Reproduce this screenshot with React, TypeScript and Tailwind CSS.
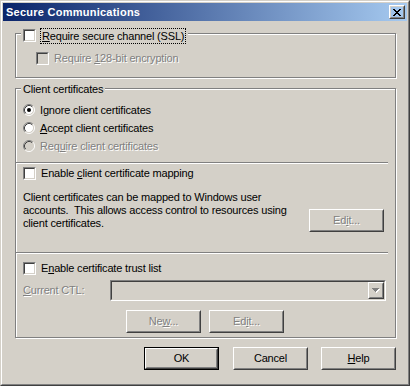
import type { ReactNode } from "react";

const dis = "text-[#808080] [text-shadow:1px_1px_0_#ffffff]";

function Check({ disabled }: { disabled?: boolean }) {
  return (
    <span className="flex h-[13px] w-[13px] shrink-0 border border-t-[#808080] border-l-[#808080] border-r-white border-b-white">
      <span
        className={`flex-1 border border-t-[#404040] border-l-[#404040] border-r-[#d4d0c8] border-b-[#d4d0c8] ${
          disabled ? "bg-[#d4d0c8]" : "bg-white"
        }`}
      />
    </span>
  );
}

function Radio({ checked, disabled }: { checked?: boolean; disabled?: boolean }) {
  return (
    <svg width="12" height="12" viewBox="0 0 12 12" className="shrink-0">
      <circle cx="6" cy="6" r="4.5" fill={disabled ? "#d4d0c8" : "#ffffff"} />
      <path d="M2.11 9.89A5.5 5.5 0 0 1 9.89 2.11" fill="none" stroke="#808080" />
      <path d="M9.89 2.11A5.5 5.5 0 0 1 2.11 9.89" fill="none" stroke="#ffffff" />
      <path d="M2.82 9.18A4.5 4.5 0 0 1 9.18 2.82" fill="none" stroke="#404040" />
      <path d="M9.18 2.82A4.5 4.5 0 0 1 2.82 9.18" fill="none" stroke="#d4d0c8" />
      {checked && <circle cx="6" cy="6" r="2" fill="#000000" />}
    </svg>
  );
}

function Raised({ children }: { children: ReactNode }) {
  return (
    <div className="flex h-full w-full border border-t-white border-l-white border-r-[#404040] border-b-[#404040]">
      <div className="flex flex-1 items-center justify-center border border-t-[#d4d0c8] border-l-[#d4d0c8] border-r-[#808080] border-b-[#808080]">
        {children}
      </div>
    </div>
  );
}

function Button({
  children,
  isDefault,
  disabled,
}: {
  children: ReactNode;
  isDefault?: boolean;
  disabled?: boolean;
}) {
  return (
    <div className={`h-[23px] w-[75px] shrink-0 ${isDefault ? "border border-black" : ""}`}>
      <Raised>
        <span className={`leading-[13px] ${disabled ? dis : "text-black"}`}>{children}</span>
      </Raised>
    </div>
  );
}

function U({ children }: { children: ReactNode }) {
  return <span className="underline underline-offset-[1px]">{children}</span>;
}

function Etched() {
  return <div className="h-[2px] w-[372px] border-t border-b border-t-[#808080] border-b-white" />;
}

export default function App() {
  return (
    <div className="h-[386px] w-[410px] border border-t-[#d4d0c8] border-l-[#d4d0c8] border-r-[#404040] border-b-[#404040] bg-[#d4d0c8] font-['Liberation_Sans',Arial,sans-serif] text-[11px] tracking-[-0.18px] text-black">
      <div className="flex h-full flex-col border border-t-white border-l-white border-r-[#808080] border-b-[#808080] p-px">
        {/* caption */}
        <div className="flex h-[18px] shrink-0 items-center justify-between bg-[linear-gradient(to_right,#0a246a,#a6caf0)] pl-[3px] pr-[2px]">
          <span className="text-[11px] leading-none font-bold tracking-[0.25px] text-white">
            Secure Communications
          </span>
          <div className="h-[14px] w-[16px]">
            <Raised>
              <svg width="8" height="7" viewBox="0 0 8 7" shapeRendering="crispEdges">
                <path
                  fill="#000000"
                  d="M0 0h2v1H0zM6 0h2v1H6zM1 1h2v1H1zM5 1h2v1H5zM2 2h4v1H2zM3 3h2v1H3zM2 4h4v1H2zM1 5h2v1H1zM5 5h2v1H5zM0 6h2v1H0zM6 6h2v1H6z"
                />
              </svg>
            </Raised>
          </div>
        </div>

        {/* SSL group */}
        <div className="relative ml-3 mt-3 h-[45px] w-[381px] border border-[#808080] shadow-[inset_1px_1px_0_#ffffff,1px_1px_0_#ffffff]">
          <div className="absolute left-[5px] top-[-6px] flex bg-[#d4d0c8] px-[2px]">
            <span className="mt-px">
              <Check />
            </span>
            <span className="ml-1 h-[16px] border border-dotted border-black px-px leading-[14px]">
              <U>R</U>equire secure channel (SSL)
            </span>
          </div>
          <div className="flex h-[13px] items-center pl-[20px] mt-[18px]">
            <Check disabled />
            <span className={`ml-[5px] leading-[13px] ${dis}`}>
              Require <U>1</U>28-bit encryption
            </span>
          </div>
        </div>

        {/* client certificates group */}
        <div className="relative ml-3 mt-[10px] flex h-[250px] w-[381px] flex-col border border-[#808080] pt-[12px] shadow-[inset_1px_1px_0_#ffffff,1px_1px_0_#ffffff]">
          <span className="absolute left-[5px] top-[-6px] bg-[#d4d0c8] px-[2px] leading-[13px]">
            Client certificates
          </span>
          <div className="flex h-[18px] items-center pl-[7px]">
            <Radio checked />
            <span className="ml-[5px] leading-[13px]">
              I<U>g</U>nore client certificates
            </span>
          </div>
          <div className="flex h-[18px] items-center pl-[7px]">
            <Radio />
            <span className="ml-[5px] leading-[13px]">
              <U>A</U>ccept client certificates
            </span>
          </div>
          <div className="flex h-[18px] items-center pl-[7px]">
            <Radio disabled />
            <span className={`ml-[5px] leading-[13px] ${dis}`}>
              Req<U>u</U>ire client certificates
            </span>
          </div>

          <div className="mt-[7px]">
            <Etched />
          </div>

          <div className="mt-[3px] flex h-[13px] items-center pl-[7px]">
            <Check />
            <span className="ml-[5px] leading-[13px]">
              Enable <U>c</U>lient certificate mapping
            </span>
          </div>

          <div className="mt-[11px] flex pl-[7px]">
            <p className="w-[286px] leading-[13px]">
              Client certificates can be mapped to Windows user
              <br />
              {"accounts.\u00a0 This allows access control to resources using"}
              <br />
              client certificates.
            </p>
            <div className="mt-[18px]">
              <Button disabled>
                Ed<U>i</U>t...
              </Button>
            </div>
          </div>

          <div className="mt-[20px]">
            <Etched />
          </div>

          <div className="mt-[8px] flex h-[13px] items-center pl-[7px]">
            <Check />
            <span className="ml-[5px] leading-[13px]">
              E<U>n</U>able certificate trust list
            </span>
          </div>

          <div className="mt-[5px] flex h-[21px] items-center pl-[7px]">
            <span className={`w-[87px] leading-[13px] ${dis}`}>
              <U>C</U>urrent CTL:
            </span>
            <div className="flex h-[21px] w-[276px] border border-t-[#808080] border-l-[#808080] border-r-white border-b-white">
              <div className="flex flex-1 justify-end border border-t-[#404040] border-l-[#404040] border-r-[#d4d0c8] border-b-[#d4d0c8] bg-[#d4d0c8]">
                <div className="h-[17px] w-[16px]">
                  <Raised>
                    <svg width="8" height="5" viewBox="0 0 8 5" shapeRendering="crispEdges">
                      <path fill="#ffffff" d="M1 1h7v1H1zM2 2h5v1H2zM3 3h3v1H3zM4 4h1v1H4z" />
                      <path fill="#808080" d="M0 0h7v1H0zM1 1h5v1H1zM2 2h3v1H2zM3 3h1v1H3z" />
                    </svg>
                  </Raised>
                </div>
              </div>
            </div>
          </div>

          <div className="mt-[9px] flex gap-[8px] pl-[110px]">
            <Button disabled>
              Ne<U>w</U>...
            </Button>
            <Button disabled>
              Ed<U>i</U>t...
            </Button>
          </div>
        </div>

        {/* dialog buttons */}
        <div className="mt-[9px] flex pl-[141px]">
          <Button isDefault>OK</Button>
          <div className="ml-[14px]">
            <Button>Cancel</Button>
          </div>
          <div className="ml-[13px]">
            <Button>
              <U>H</U>elp
            </Button>
          </div>
        </div>
      </div>
    </div>
  );
}
